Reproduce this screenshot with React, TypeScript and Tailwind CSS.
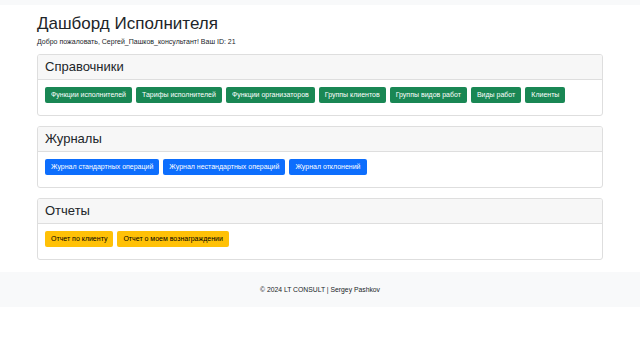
import React from "react";

const sections = [
  {
    title: "Справочники",
    color: "bg-[#198754] text-white",
    items: [
      "Функции исполнителей",
      "Тарифы исполнителей",
      "Функции организаторов",
      "Группы клиентов",
      "Группы видов работ",
      "Виды работ",
      "Клиенты",
    ],
  },
  {
    title: "Журналы",
    color: "bg-[#0d6efd] text-white",
    items: [
      "Журнал стандартных операций",
      "Журнал нестандартных операций",
      "Журнал отклонений",
    ],
  },
  {
    title: "Отчеты",
    color: "bg-[#ffc107] text-black",
    items: ["Отчет по клиенту", "Отчет о моем вознаграждении"],
  },
];

export default function App() {
  return (
    <div
      className="w-[640px] h-[360px] bg-white text-[#212529] overflow-hidden"
      style={{ fontFamily: '"Liberation Sans", Arial, sans-serif' }}
    >
      <div className="h-[5px] bg-[#f8f9fa]" />
      <div className="mx-[37px] w-[566px] pt-[9px]">
        <h1 className="text-[17px] leading-[20px] font-normal">Дашборд Исполнителя</h1>
        <p className="text-[7px] leading-[12px] mt-[2px]">
          Добро пожаловать, Сергей_Пашков_консультант! Ваш ID: 21
        </p>
        <div className="flex flex-col gap-[10px] mt-[6px]">
          {sections.map((s) => (
            <div
              key={s.title}
              className="border border-[#dedede] rounded-[3px] overflow-hidden"
            >
              <div className="h-[25px] bg-[#f7f7f7] border-b border-[#dedede] px-[7px] flex items-center">
                <span className="text-[13px] leading-[16px]">{s.title}</span>
              </div>
              <div className="px-[7px] pt-[7px] pb-[12px] flex flex-wrap gap-[4px]">
                {s.items.map((it) => (
                  <div
                    key={it}
                    className={`${s.color} h-[16px] px-[6px] rounded-[2px] flex items-center text-[7px] leading-[10px]`}
                  >
                    {it}
                  </div>
                ))}
              </div>
            </div>
          ))}
        </div>
      </div>
      <div className="mt-[12px] h-[35px] bg-[#f8f9fa] flex items-center justify-center">
        <span className="text-[6.8px] leading-[10px] text-[#212529]">
          © 2024 LT CONSULT | Sergey Pashkov
        </span>
      </div>
    </div>
  );
}
